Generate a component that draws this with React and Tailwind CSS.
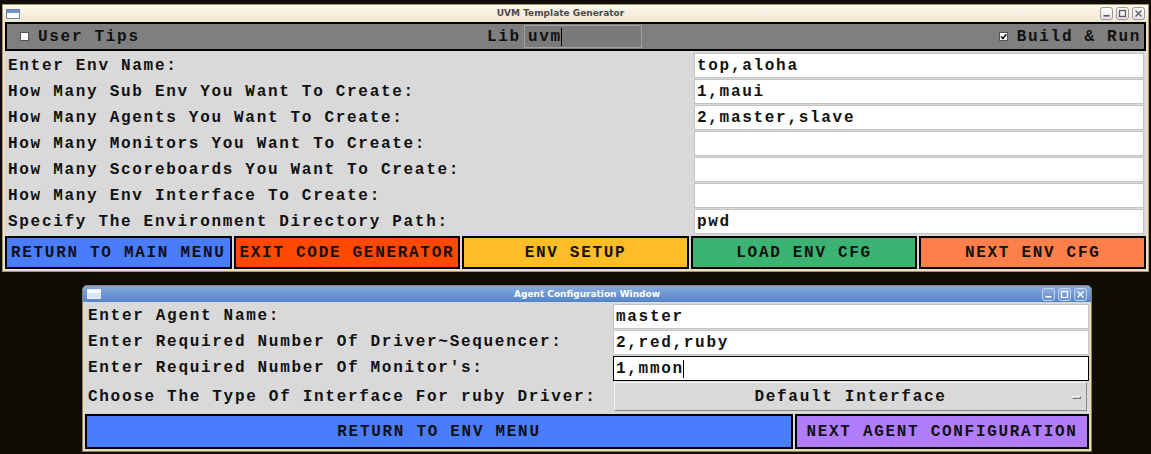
import React from "react";

const mono = { fontFamily: '"Liberation Mono", "DejaVu Sans Mono", monospace' };

function WinButtons({ dark }) {
  const box = dark
    ? "flex h-[13px] w-[13px] items-center justify-center rounded-[3px] border border-[#c9d7ee] bg-gradient-to-b from-[#8fb0e0] to-[#5f8bcb]"
    : "flex h-[13px] w-[13px] items-center justify-center rounded-[3px] border border-[#9a9a9a] bg-gradient-to-b from-[#ffffff] to-[#e4e4e4]";
  const stroke = dark ? "#ffffff" : "#5a5a5a";
  return (
    <div className="flex items-center gap-[3px]">
      <div className={box}>
        <svg width="9" height="9" viewBox="0 0 9 9">
          <rect x="1.5" y="6" width="6" height="1.6" fill={stroke} />
        </svg>
      </div>
      <div className={box}>
        <svg width="9" height="9" viewBox="0 0 9 9">
          <rect x="1.5" y="1.5" width="6" height="6" fill="none" stroke={stroke} strokeWidth="1.3" />
        </svg>
      </div>
      <div className={box}>
        <svg width="9" height="9" viewBox="0 0 9 9">
          <path d="M1.5 1.5 L7.5 7.5 M7.5 1.5 L1.5 7.5" stroke={stroke} strokeWidth="1.4" />
        </svg>
      </div>
    </div>
  );
}

function WinIcon({ dark }) {
  return (
    <div
      className={
        "flex h-[10px] w-[14px] flex-col border " +
        (dark ? "border-[#e8eef8] bg-[#d9e3f2]" : "border-[#6f86a8] bg-white")
      }
    >
      <div className={"h-[3px] w-full " + (dark ? "bg-[#f4f7fc]" : "bg-[#6f93c8]")} />
    </div>
  );
}

function Field({ value, focused, cursor }) {
  return (
    <div
      className={
        "flex h-full items-center bg-white pl-[2px] text-[16px] font-bold tracking-[1.7px] text-[#111] " +
        (focused ? "border border-black" : "border border-[#c4c4c4]")
      }
      style={mono}
    >
      <span>{value}</span>
      {cursor && <span className="ml-[-1px] inline-block h-[18px] w-[1px] bg-black" />}
    </div>
  );
}

const envRows = [
  ["Enter Env Name:", "top,aloha"],
  ["How Many Sub Env You Want To Create:", "1,maui"],
  ["How Many Agents You Want To Create:", "2,master,slave"],
  ["How Many Monitors You Want To Create:", ""],
  ["How Many Scoreboards You Want To Create:", ""],
  ["How Many Env Interface To Create:", ""],
  ["Specify The Environment Directory Path:", "pwd"],
];

const envButtons = [
  ["RETURN TO MAIN MENU", "bg-[#4a7dfc]"],
  ["EXIT CODE GENERATOR", "bg-[#ff4800]"],
  ["ENV SETUP", "bg-[#fcbd27]"],
  ["LOAD ENV CFG", "bg-[#3cb372]"],
  ["NEXT ENV CFG", "bg-[#ff7f4b]"],
];

export default function App() {
  return (
    <div className="h-[454px] w-[1151px] overflow-hidden bg-[#0e0c05] pt-[4px]">
      {/* UVM Template Generator window */}
      <div className="ml-[2px] w-[1147px] border border-[#a8976a] bg-[#ebe2c6]">
        <div className="relative flex h-[17px] items-center justify-between bg-gradient-to-b from-[#fcf9ef] to-[#efe7cf] px-[3px]">
          <WinIcon />
          <span
            className="absolute left-0 right-[30px] top-[2px] text-center text-[9px] font-bold text-[#4a4a4a]"
            style={{ fontFamily: '"DejaVu Sans", sans-serif' }}
          >
            UVM Template Generator
          </span>
          <WinButtons />
        </div>
        <div className="px-[2px] pb-[2px]" style={mono}>
          <div className="flex h-[29px] items-center border-2 border-black bg-[#7f7f7f] text-[16px] font-bold tracking-[1.7px] text-[#111]">
            <div className="flex w-[480px] items-center">
              <span className="ml-[13px] h-[9px] w-[9px] border border-[#555] bg-white" />
              <span className="ml-[9px]">User Tips</span>
            </div>
            <div className="flex items-center">
              <span>Lib</span>
              <div className="ml-[3px] flex h-[23px] w-[118px] items-center border border-[#a3a3a3] bg-[#7a7a7a] pl-[3px]">
                <span>uvm</span>
                <span className="ml-[-1px] inline-block h-[18px] w-[1px] bg-black" />
              </div>
            </div>
            <div className="ml-auto mr-[3px] flex items-center">
              <span className="flex h-[9px] w-[9px] items-center justify-center border border-[#555] bg-white">
                <svg width="7" height="7" viewBox="0 0 7 7">
                  <path d="M1 3.5 L3 5.5 L6.2 1.2" fill="none" stroke="#111" strokeWidth="1.6" />
                </svg>
              </span>
              <span className="ml-[9px]">Build &amp; Run</span>
            </div>
          </div>
          <div className="flex flex-col bg-[#d9d9d9] pt-[1px]">
            {envRows.map(([label, value]) => (
              <div key={label} className="flex h-[26px]">
                <div className="flex w-[688px] items-center pl-[3px] pt-[1px] text-[16px] font-bold tracking-[1.7px] text-[#111]">
                  {label}
                </div>
                <div className="ml-[1px] w-[450px] pt-[1px]">
                  <Field value={value} />
                </div>
              </div>
            ))}
          </div>
          <div className="grid grid-cols-5 gap-[2px] bg-[#d9d9d9] pt-[2px]">
            {envButtons.map(([label, color]) => (
              <div
                key={label}
                className={
                  "flex h-[33px] items-center justify-center border-2 border-black text-[16px] font-bold tracking-[1.7px] text-[#111] " +
                  color
                }
              >
                {label}
              </div>
            ))}
          </div>
        </div>
      </div>

      {/* Agent Configuration Window */}
      <div className="ml-[82px] mt-[13px] w-[1010px] overflow-hidden rounded-t-[5px] border border-[#8e7f57] bg-[#e4dabd]">
        <div className="relative flex h-[16px] items-center justify-between bg-gradient-to-b from-[#86aade] to-[#5484c6] px-[4px]">
          <WinIcon dark />
          <span
            className="absolute left-0 right-0 top-[2px] text-center text-[9px] font-bold text-white"
            style={{ fontFamily: '"DejaVu Sans", sans-serif' }}
          >
            Agent Configuration Window
          </span>
          <WinButtons dark />
        </div>
        <div className="px-[2px] pb-[2px]" style={mono}>
          <div className="flex flex-col bg-[#d9d9d9] pt-[1px]">
            {[
              ["Enter Agent Name:", "master", false],
              ["Enter Required Number Of Driver~Sequencer:", "2,red,ruby", false],
              ["Enter Required Number Of Monitor's:", "1,mmon", true],
            ].map(([label, value, focus]) => (
              <div key={label} className="flex h-[26px]">
                <div className="flex w-[527px] items-center pl-[3px] text-[16px] font-bold tracking-[1.7px] text-[#111]">
                  {label}
                </div>
                <div className="ml-[1px] w-[476px] pt-[1px]">
                  <Field value={value} focused={focus} cursor={focus} />
                </div>
              </div>
            ))}
            <div className="flex h-[31px] pt-[1px]">
              <div className="flex w-[527px] items-center pl-[3px] text-[16px] font-bold tracking-[1.7px] text-[#111]">
                Choose The Type Of Interface For ruby Driver:
              </div>
              <div className="ml-[2px] relative flex h-[29px] w-[473px] items-center justify-center border border-t-[#f4f4f4] border-l-[#f4f4f4] border-r-[#8a8a8a] border-b-[#8a8a8a] bg-[#d9d9d9] text-[16px] font-bold tracking-[1.7px] text-[#111]">
                Default Interface
                <span className="absolute right-[5px] top-[13px] h-[3px] w-[9px] border border-t-[#f4f4f4] border-l-[#f4f4f4] border-r-[#777] border-b-[#777] bg-[#cfcfcf]" />
              </div>
            </div>
          </div>
          <div className="flex gap-[2px] bg-[#d9d9d9] pt-[2px]">
            <div className="flex h-[35px] w-[708px] items-center justify-center border-2 border-black bg-[#4a7dfc] text-[16px] font-bold tracking-[1.7px] text-[#111]">
              RETURN TO ENV MENU
            </div>
            <div className="flex h-[35px] flex-1 items-center justify-center border-2 border-black bg-[#b27dfc] text-[16px] font-bold tracking-[1.7px] text-[#111]">
              NEXT AGENT CONFIGURATION
            </div>
          </div>
        </div>
      </div>
    </div>
  );
}
